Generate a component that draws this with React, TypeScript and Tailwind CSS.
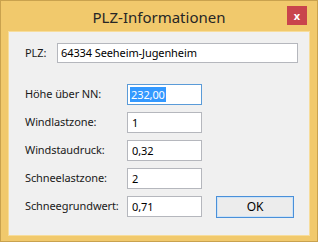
import React from "react";

const font = { fontFamily: '"Segoe UI", "Noto Sans", "Open Sans", sans-serif' };

function Field({ value, selected }: { value: string; selected?: boolean }) {
  return (
    <div
      className={`flex items-center h-[21px] w-[75px] bg-white border ${
        selected ? "border-[#5a9bd8]" : "border-[#b5b7bd]"
      } pl-[2px] text-black leading-none`}
    >
      {selected ? (
        <span className="bg-[#3399ff] text-white px-[1px] py-[2px]">{value}</span>
      ) : (
        <span className="px-[2px]">{value}</span>
      )}
    </div>
  );
}

export default function App() {
  const rows: { label: string; value: string; selected?: boolean }[] = [
    { label: "Höhe über NN:", value: "232,00", selected: true },
    { label: "Windlastzone:", value: "1" },
    { label: "Windstaudruck:", value: "0,32" },
    { label: "Schneelastzone:", value: "2" },
    { label: "Schneegrundwert:", value: "0,71" },
  ];
  return (
    <div className="w-[321px] h-[244px] bg-white" style={font}>
      <div className="w-[318px] h-[242px] border border-[#c9a24e] bg-[#f1c96c] flex flex-col">
        <div className="relative h-[30px] flex items-center justify-center">
          <span className="text-[15px] text-[#262626] leading-none mt-[2px]">PLZ-Informationen</span>
          <div className="absolute left-[286px] top-[5px] w-[20px] h-[19px] bg-[#c9444c] flex items-center justify-center">
            <span className="text-white text-[11px] font-bold leading-none">x</span>
          </div>
        </div>
        <div className="mx-[7px] h-[205px] bg-[#f0f0f0] border border-[#f7dd9c] flex flex-col pl-[16px] pr-[11px] pt-[11px] text-[11px] tracking-[-0.1px] text-[#1a1a1a]">
          <div className="flex items-center h-[20px]">
            <span className="w-[32px]">PLZ:</span>
            <div className="flex-1 h-[20px] bg-white border border-[#b5b7bd] flex items-center pl-[3px] text-black">
              64334 Seeheim-Jugenheim
            </div>
          </div>
          <div className="flex mt-[21px]">
            <div className="flex flex-col gap-[7px]">
              {rows.map((r) => (
                <div key={r.label} className="flex items-center h-[21px]">
                  <span className="w-[102px]">{r.label}</span>
                  <Field value={r.value} selected={r.selected} />
                </div>
              ))}
            </div>
            <div className="flex flex-col justify-end ml-[14px]">
              <div className="w-[78px] h-[22px] border border-[#4a90d9] bg-[#e8eef4] flex items-center justify-center mb-[-1px]">
                <div className="w-[76px] h-[20px] border border-[#cde3f7] bg-[#ececec] flex items-center justify-center text-black text-[12px]">
                  OK
                </div>
              </div>
            </div>
          </div>
        </div>
      </div>
    </div>
  );
}
